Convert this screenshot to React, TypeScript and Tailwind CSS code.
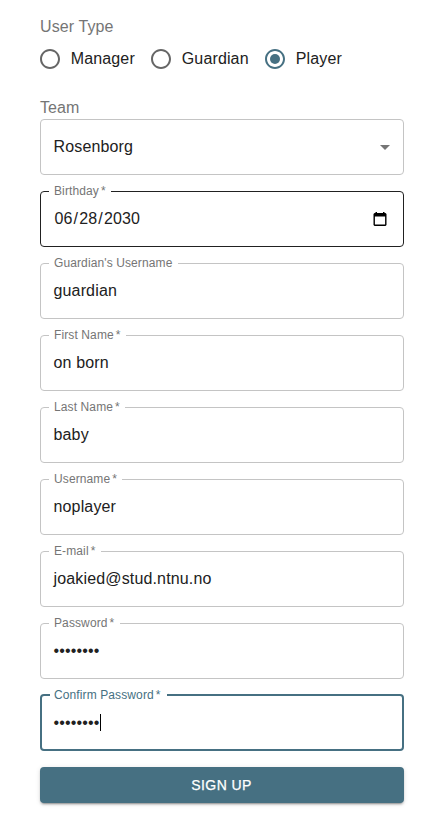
import React from "react";

type FieldProps = {
  label: string;
  required?: boolean;
  size?: string;
  frame?: string;
  labelStyle?: string;
  notch: string;
  children: React.ReactNode;
};

function Field({
  label,
  required = true,
  size = "h-14",
  frame = "border border-[#c4c4c4] pl-[13px]",
  labelStyle = "-top-2 text-[#757575]",
  notch,
  children,
}: FieldProps) {
  return (
    <div className={`relative ${size}`}>
      <div className={`flex items-center rounded ${size} ${frame}`}>{children}</div>
      <span className={`absolute top-0 h-[2px] bg-white ${notch}`} />
      <label className={`absolute left-[14px] whitespace-nowrap text-[12px] leading-4 tracking-[0.11px] ${labelStyle}`}>
        {label}
        {required && <span className="ml-[2px]">*</span>}
      </label>
    </div>
  );
}

function Radio({ label, checked = false, width }: { label: string; checked?: boolean; width: string }) {
  return (
    <div className={`flex items-center ${width}`}>
      <svg viewBox="0 0 24 24" className={`-ml-[2px] size-6 shrink-0 ${checked ? "text-[#467082]" : "text-[#666]"}`} fill="currentColor">
        <path d="M12 2C6.48 2 2 6.48 2 12s4.48 10 10 10 10-4.48 10-10S17.52 2 12 2zm0 18c-4.42 0-8-3.58-8-8s3.58-8 8-8 8 3.58 8 8-3.58 8-8 8z" />
        {checked && <circle cx="12" cy="12" r="5" />}
      </svg>
      <span className="ml-[8.8px] whitespace-nowrap tracking-[0.13px]">{label}</span>
    </div>
  );
}

function Value({ children }: { children: string }) {
  return <span className="-ml-[0.5px] tracking-[0.15px]">{children}</span>;
}

function Dots({ caret = false }: { caret?: boolean }) {
  return (
    <div className="flex h-6 items-center">
      <span className="-ml-[0.5px] tracking-[0.15px]">••••••••</span>
      {caret && <span className="ml-[0.5px] h-[17px] w-px bg-black" />}
    </div>
  );
}

export default function App() {
  return (
    <main className="h-[819px] w-[430px] bg-white pl-10 pr-[26px] pt-[18px] font-['Liberation_Sans',Arial,sans-serif] text-[16px] leading-[18px] text-[#212121]">
      <div className="tracking-[0.1px] text-[#757575]">User Type</div>
      <div className="mt-[11px] flex h-6">
        <Radio label="Manager" width="w-[111px]" />
        <Radio label="Guardian" width="w-[114px]" />
        <Radio label="Player" checked width="w-[100px]" />
      </div>
      <div className="mt-7 tracking-[0.1px] text-[#757575]">Team</div>
      <div className="mt-[2px] flex flex-col gap-4">
        <div className="flex h-14 items-center justify-between rounded border border-[#c4c4c4] pl-[13px] pr-[6px]">
          <Value>Rosenborg</Value>
          <svg viewBox="0 0 24 24" className="size-6 text-[#757575]" fill="currentColor">
            <path d="M7 10l5 5 5-5z" />
          </svg>
        </div>
        <Field label="Birthday" notch="left-[9px] w-[62px]" frame="border border-[#212121] pl-[14px] pr-[16px]">
          <span className="-ml-[0.5px] flex-1 tracking-[0.15px]">
            06<span className="mx-px">/</span>28<span className="mx-px">/</span>2030
          </span>
          <svg className="h-[14px] w-[14px] text-black" viewBox="0 0 14 14" fill="currentColor">
            <path fillRule="evenodd" d="M2.5 0h1.5v1h6V0h1.5v1h1l1 1v11l-1 1H1.5l-1-1V2l1-1h1zM1.9 4.5v8.1h10.2V4.5z" />
          </svg>
        </Field>
        <Field label="Guardian's Username" required={false} notch="left-[9px] w-[129px]">
          <Value>guardian</Value>
        </Field>
        <Field label="First Name" notch="left-[9px] w-[77px]">
          <Value>on born</Value>
        </Field>
        <Field label="Last Name" notch="left-[9px] w-[76px]">
          <Value>baby</Value>
        </Field>
        <Field label="Username" notch="left-[9px] w-[73px]">
          <Value>noplayer</Value>
        </Field>
        <Field label="E-mail" notch="left-[9px] w-[52px]">
          <Value>joakied@stud.ntnu.no</Value>
        </Field>
        <Field label="Password" notch="left-[9px] w-[71px]">
          <Dots />
        </Field>
        <div className="-mt-px">
          <Field
            label="Confirm Password"
            size="h-[57px]"
            notch="left-[10px] w-[117px]"
            frame="border-2 border-[#467082] pl-[12px]"
            labelStyle="-top-[7px] text-[#467082]"
          >
            <Dots caret />
          </Field>
        </div>
        <button className="h-9 w-full rounded bg-[#467082] pr-px text-[14px] font-medium tracking-[0.4px] text-white shadow-[0_3px_1px_-2px_rgba(0,0,0,0.2),0_2px_2px_0_rgba(0,0,0,0.14),0_1px_5px_0_rgba(0,0,0,0.12)] [-webkit-text-stroke:0.25px_white]">
          SIGN UP
        </button>
      </div>
    </main>
  );
}
